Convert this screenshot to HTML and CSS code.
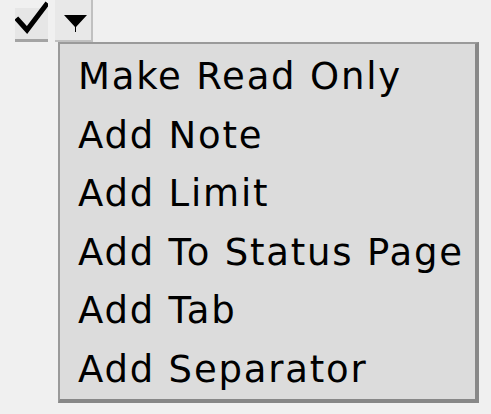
FILE: index.html
```html
<!DOCTYPE html>
<html>
<head>
<meta charset="utf-8">
<link rel="stylesheet" href="styles.css">
</head>
<body>
<div class="toolbar">
  <span class="btn check">
    <svg width="33" height="39" viewBox="0 0 33 39"><path d="M3 20 L12 30 L31 5" fill="none" stroke="#000" stroke-width="5" stroke-linejoin="miter" stroke-linecap="square"/></svg>
  </span>
  <span class="btn drop">
    <svg width="36" height="40" viewBox="0 0 36 40"><path d="M9 15 H32 L21 27 L21 32 L20 32 L20 27 Z" fill="#000"/></svg>
  </span>
</div>
<ul class="menu">
  <li>Make Read Only</li>
  <li>Add Note</li>
  <li>Add Limit</li>
  <li>Add To Status Page</li>
  <li>Add Tab</li>
  <li>Add Separator</li>
</ul>
</body>
</html>
```

FILE: styles.css
```css
html, body { margin: 0; padding: 0; }
body {
  background: #f0f0f0;
  width: 491px;
  height: 414px;
  overflow: hidden;
  font-family: "DejaVu Sans", sans-serif;
}
.toolbar {
  display: flex;
  gap: 7px;
  padding: 0 0 0 15px;
  height: 42px;
}
.btn {
  display: block;
  box-sizing: border-box;
}
.btn svg { display: block; }
.check {
  width: 33px;
  height: 42px;
  background: linear-gradient(#f0f0f0 0, #f0f0f0 8px, #e6e6e6 8px);
  border-bottom: 3px solid #a4a4a4;
}
.drop {
  width: 38px;
  height: 42px;
  background: #e8e8e8;
  border-right: 2px solid #c0c0c0;
  border-bottom: 2px solid #c0c0c0;
}
.menu {
  list-style: none;
  margin: 0 0 0 58px;
  padding: 4px 0 0 18px;
  width: 421px;
  height: 361px;
  box-sizing: border-box;
  background: #dcdcdc;
  border-top: 2px solid #9a9a9a;
  border-left: 2px solid #9a9a9a;
  border-right: 4px solid #888;
  border-bottom: 4px solid #888;
}
.menu li {
  font-size: 37px;
  line-height: 58.6px;
  color: #000;
  letter-spacing: 1.8px;
}
```
